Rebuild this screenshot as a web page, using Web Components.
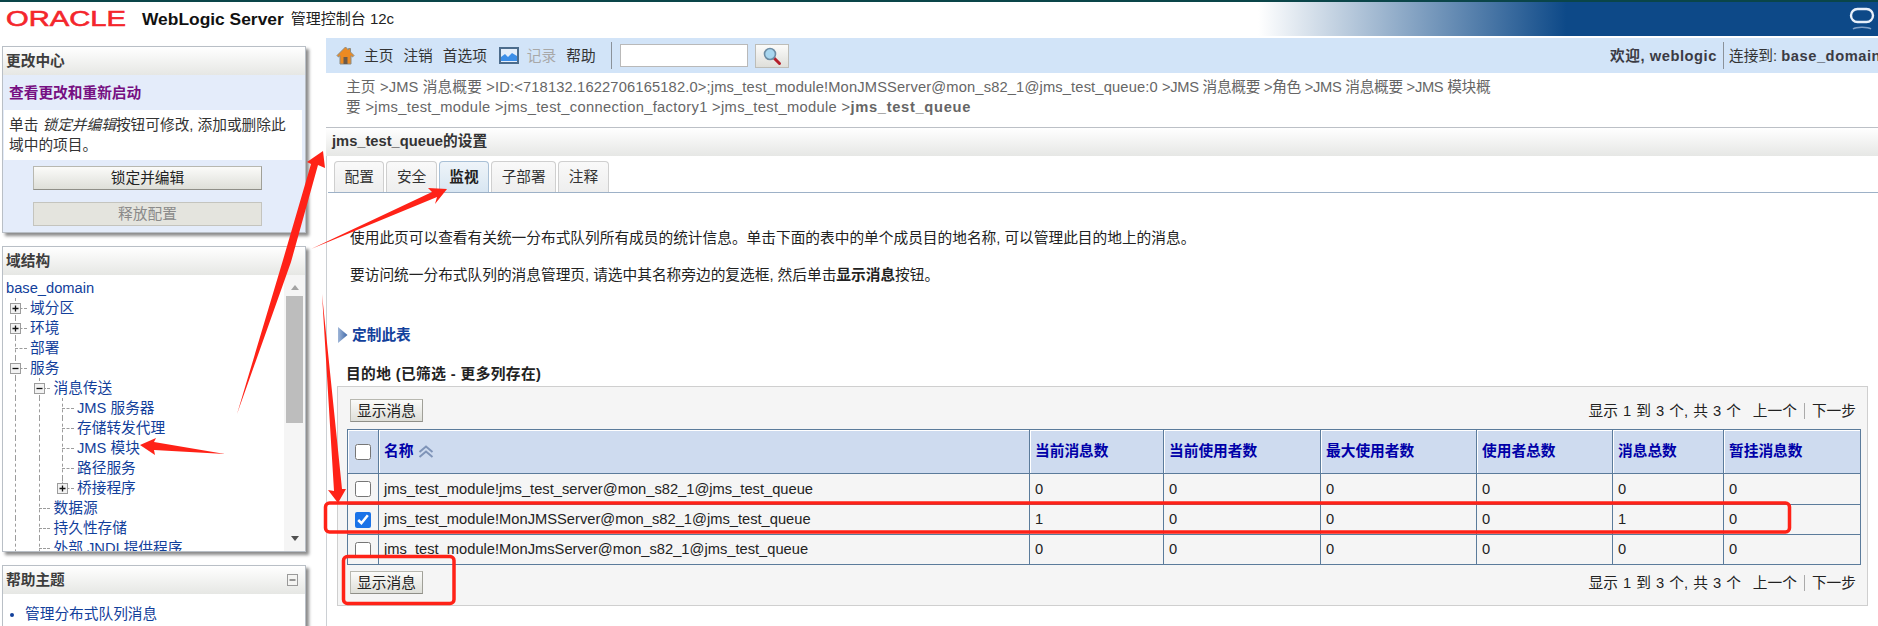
<!DOCTYPE html>
<html lang="zh">
<head>
<meta charset="utf-8">
<title>WebLogic Server</title>
<style>
  html, body {
    margin: 0;
    padding: 0;
    background: #fff;
  }
  body {
    position: relative;
    width: 1878px;
    height: 626px;
    overflow: hidden;
    font: 14.7px/20px "Liberation Sans", "Noto Sans CJK SC", sans-serif;
    color: #333;
  }
  .page {
    display: flex;
    height: 588px;
    margin-top: 2px;
    overflow: hidden;
  }
  wl-sidebar { flex: none; }
  wl-main { flex: 1; min-width: 0; }
</style>
</head>
<body>
  <wl-topbar></wl-topbar>
  <div class="page">
    <wl-sidebar>
      <wl-panel title="更改中心"><wl-change-center></wl-change-center></wl-panel>
      <wl-panel title="域结构"><wl-tree></wl-tree></wl-panel>
      <wl-panel title="帮助主题" collapsible><wl-help></wl-help></wl-panel>
    </wl-sidebar>
    <wl-main>
      <wl-nav></wl-nav>
      <wl-breadcrumb></wl-breadcrumb>
      <wl-settings></wl-settings>
    </wl-main>
  </div>
  <wl-annotations></wl-annotations>

<script>
class WlTopbar extends HTMLElement {
  connectedCallback() {
    const shadow = this.attachShadow({ mode: 'open' });
    shadow.innerHTML = `
      <style>
        :host {
          display: flex;
          align-items: center;
          height: 34px;
          border-top: 2px solid #0a4549;
          background: linear-gradient(to right, #fff 67%, #0d4988 83.4%);
          color: #222;
        }
        .logo { flex: none; margin-left: 6px; display: block; overflow: visible; }
        .product {
          margin-left: 12px;
          font-weight: bold;
          font-size: 17.4px;
          color: #111;
        }
        .console { margin-left: 7px; font-size: 15px; }
        .mark { margin-left: auto; margin-right: 3px; display: block; }
      </style>
      <svg class="logo" width="124" height="26" viewBox="0 0 124 26">
        <text x="0" y="20" font-family="Liberation Sans" font-size="22.5" fill="#f4262c" stroke="#f4262c" stroke-width=".6" textLength="120" lengthAdjust="spacingAndGlyphs">ORACLE</text>
      </svg>
      <span class="product">WebLogic Server</span>
      <span class="console">管理控制台 12c</span>
      <svg class="mark" width="26" height="26" viewBox="0 0 26 26" fill="none">
        <rect x="2" y="3" width="22" height="13" rx="6.5" stroke="#e8f0fa" stroke-width="2.4"/>
        <path d="M4 23c3-2.4 15-2.4 18 0" stroke="#7f9fc6" stroke-width="1.6"/>
      </svg>
    `;
  }
}
customElements.define('wl-topbar', WlTopbar);

class WlSidebar extends HTMLElement {
  connectedCallback() {
    const shadow = this.attachShadow({ mode: 'open' });
    shadow.innerHTML = `
      <style>
        :host {
          display: flex;
          flex-direction: column;
          gap: 13px;
          box-sizing: border-box;
          width: 326px;
          padding: 8px 20px 0 2px;
        }
      </style>
      <slot></slot>
    `;
  }
}
customElements.define('wl-sidebar', WlSidebar);

class WlPanel extends HTMLElement {
  connectedCallback() {
    const shadow = this.attachShadow({ mode: 'open' });
    const toggle = this.hasAttribute('collapsible')
      ? `<svg width="11" height="12" viewBox="0 0 11 12"><rect x=".5" y=".5" width="10" height="11" fill="#f4f4f2" stroke="#9a9a9a"/><path d="M2.5 6h6" stroke="#555" stroke-width="1.2"/></svg>`
      : '';
    shadow.innerHTML = `
      <style>
        :host {
          display: block;
          flex: none;
          border: 1px solid #b9bfc6;
          box-shadow: 3px 3px 3px #8c8c8c;
          background: #fff;
        }
        .head {
          display: flex;
          align-items: center;
          justify-content: space-between;
          box-sizing: border-box;
          height: 28px;
          padding: 0 7px 0 3px;
          font-weight: bold;
          color: #3d3d3d;
          background: linear-gradient(#fff, #e6e7e4);
        }
      </style>
      <div class="head"><span>${this.getAttribute('title')}</span>${toggle}</div>
      <slot></slot>
    `;
  }
}
customElements.define('wl-panel', WlPanel);

class WlButton extends HTMLElement {
  connectedCallback() {
    const shadow = this.attachShadow({ mode: 'open' });
    shadow.innerHTML = `
      <style>
        :host {
          display: inline-flex;
          align-items: center;
          justify-content: center;
          box-sizing: border-box;
          height: 23px;
          border: 1px solid #b8b8b0;
          border-bottom-color: #8f8f88;
          border-right-color: #a0a098;
          background: linear-gradient(#fbfbf9, #dedfd9);
          color: #222;
        }
        :host([disabled]) {
          border-color: #c4c4be;
          background: #e4e4de;
          color: #8a8a8a;
        }
      </style>
      <slot></slot>
    `;
  }
}
customElements.define('wl-button', WlButton);

class WlChangeCenter extends HTMLElement {
  connectedCallback() {
    const shadow = this.attachShadow({ mode: 'open' });
    shadow.innerHTML = `
      <style>
        :host {
          display: block;
          box-sizing: border-box;
          height: 157px;
          padding: 0 3px 0 1px;
          background: #e4ecfa;
        }
        .view {
          height: 35px;
          padding: 8px 0 0 5px;
          box-sizing: border-box;
          color: #760f82;
          font-weight: bold;
        }
        .note {
          padding: 5px;
          background: #fff;
        }
        wl-button {
          display: flex;
          width: 229px;
          height: 24px;
          margin: 6px 0 0 29px;
        }
        wl-button + wl-button { margin-top: 12px; }
      </style>
      <div class="view">查看更改和重新启动</div>
      <div class="note">单击 <i>锁定并编辑</i>按钮可修改, 添加或删除此域中的项目。</div>
      <wl-button>锁定并编辑</wl-button>
      <wl-button disabled>释放配置</wl-button>
    `;
  }
}
customElements.define('wl-change-center', WlChangeCenter);

class WlTreeRow extends HTMLElement {
  connectedCallback() {
    const shadow = this.attachShadow({ mode: 'open' });
    const guides = (this.getAttribute('guides') || '').split('').map(g =>
      `<span class="cell ${g === '1' ? 'line' : ''}"></span>`).join('');
    const toggle = this.getAttribute('toggle');
    const box = toggle
      ? `<svg class="toggle" width="11" height="11" viewBox="0 0 11 11"><rect x=".5" y=".5" width="10" height="10" fill="#f2f2f2" stroke="#9c9c9c"/><path d="M2.5 5.5h6${toggle === 'plus' ? 'M5.5 2.5v6' : ''}" stroke="#111" stroke-width="1.3"/></svg>`
      : '';
    const last = this.hasAttribute('last') ? 'half' : 'line';
    const joint = this.hasAttribute('root') ? '' : `<span class="cell joint ${last}">${box}</span>`;
    shadow.innerHTML = `
      <style>
        :host {
          display: flex;
          align-items: stretch;
          height: 20px;
          white-space: nowrap;
          color: #12409b;
        }
        .cell {
          position: relative;
          flex: none;
          width: 23.5px;
        }
        .line::before, .half::before {
          content: "";
          position: absolute;
          left: 12px;
          top: 0;
          bottom: 0;
          border-left: 1px dashed #9c9c9c;
        }
        .half::before { bottom: 50%; }
        .joint::after {
          content: "";
          position: absolute;
          left: 12px;
          right: 0;
          top: 10px;
          border-top: 1px dashed #9c9c9c;
        }
        .toggle {
          position: absolute;
          left: 7px;
          top: 5px;
          z-index: 1;
        }
        .label { padding-left: 3.5px; }
        :host([root]) .label { padding-left: 3px; }
      </style>
      ${guides}${joint}<span class="label"><slot></slot></span>
    `;
  }
}
customElements.define('wl-tree-row', WlTreeRow);

class WlTree extends HTMLElement {
  connectedCallback() {
    const shadow = this.attachShadow({ mode: 'open' });
    shadow.innerHTML = `
      <style>
        :host {
          display: flex;
          height: 276px;
          overflow: hidden;
        }
        .rows {
          flex: 1;
          min-width: 0;
          padding: 3px 0 0 0;
          overflow: hidden;
        }
        .rail {
          flex: none;
          display: flex;
          flex-direction: column;
          align-items: center;
          width: 21px;
          box-sizing: border-box;
          padding: 10px 2px 10px;
          background: #f5f5f5;
        }
        .up { border: 4.5px solid transparent; border-top: 0; border-bottom: 5px solid #a3a3a3; }
        .down { border: 4.5px solid transparent; border-bottom: 0; border-top: 5px solid #505050; }
        .thumb { width: 17px; height: 127px; margin-top: 6px; background: #bdbdbd; }
        .gap { flex: 1; }
      </style>
      <div class="rows">
        <wl-tree-row root>base_domain</wl-tree-row>
        <wl-tree-row toggle="plus">域分区</wl-tree-row>
        <wl-tree-row toggle="plus">环境</wl-tree-row>
        <wl-tree-row>部署</wl-tree-row>
        <wl-tree-row toggle="minus">服务</wl-tree-row>
        <wl-tree-row guides="1" toggle="minus">消息传送</wl-tree-row>
        <wl-tree-row guides="11">JMS 服务器</wl-tree-row>
        <wl-tree-row guides="11">存储转发代理</wl-tree-row>
        <wl-tree-row guides="11">JMS 模块</wl-tree-row>
        <wl-tree-row guides="11">路径服务</wl-tree-row>
        <wl-tree-row guides="11" toggle="plus" last>桥接程序</wl-tree-row>
        <wl-tree-row guides="1">数据源</wl-tree-row>
        <wl-tree-row guides="1">持久性存储</wl-tree-row>
        <wl-tree-row guides="1">外部 JNDI 提供程序</wl-tree-row>
      </div>
      <div class="rail">
        <span class="up"></span>
        <span class="thumb"></span>
        <span class="gap"></span>
        <span class="down"></span>
      </div>
    `;
  }
}
customElements.define('wl-tree', WlTree);

class WlHelp extends HTMLElement {
  connectedCallback() {
    const shadow = this.attachShadow({ mode: 'open' });
    shadow.innerHTML = `
      <style>
        :host {
          display: block;
          height: 60px;
          padding-top: 10px;
          box-sizing: border-box;
        }
        ul { margin: 0; padding: 0 0 0 22px; color: #12409b; }
      </style>
      <ul><li>管理分布式队列消息</li></ul>
    `;
  }
}
customElements.define('wl-help', WlHelp);

class WlNav extends HTMLElement {
  connectedCallback() {
    const shadow = this.attachShadow({ mode: 'open' });
    shadow.innerHTML = `
      <style>
        :host {
          display: flex;
          align-items: center;
          height: 35px;
          background: #d2e4f8;
          white-space: nowrap;
        }
        .left {
          flex: 1;
          display: flex;
          align-items: center;
          padding-left: 10px;
        }
        .left svg { display: block; flex: none; }
        .item { margin-left: 10px; }
        .off { color: #a8a8a8; }
        .sep { flex: none; width: 1px; height: 27px; background: #8b929a; }
        input {
          box-sizing: border-box;
          width: 128px;
          height: 23px;
          margin: 0 7px 0 9px;
          border: 1px solid #b9b9b9;
          background: #fff;
        }
        .search {
          display: flex;
          align-items: center;
          justify-content: center;
          box-sizing: border-box;
          width: 34px;
          height: 24px;
          border: 1px solid #bdbdb8;
          background: linear-gradient(#fbfbfa, #dfdfda);
        }
        .right {
          flex: none;
          display: flex;
          align-items: center;
          width: 268px;
          overflow: hidden;
        }
        .right b { color: #3b3b44; letter-spacing: .55px; }
        .right .sep { margin: 0 5px 0 6px; }
      </style>
      <div class="left">
        <svg width="19" height="19" viewBox="0 0 19 19">
          <path d="M9.5 1 1 9.5 2.5 11 4 9.6V18h11V9.6l1.5 1.4L18 9.5 14.5 6V2.500h-2v1.500z" fill="#ec8a22" stroke="#8c8c84" stroke-width="1"/>
          <rect x="7.500" y="11" width="4" height="7" fill="#6b5a4a"/>
        </svg>
        <span class="item" style="margin-left:9px">主页</span>
        <span class="item">注销</span>
        <span class="item">首选项</span>
        <svg class="item" style="margin-left:12px" width="20" height="17" viewBox="0 0 20 17">
          <rect x="1" y="1" width="18" height="15" fill="#e4eefb" stroke="#4c6c8c" stroke-width="2"/>
          <path d="M2 14V10l4-3 3 3 4-4 5 3v5z" fill="#3c8ee8"/>
        </svg>
        <span class="item off" style="margin-left:8px">记录</span>
        <span class="item">帮助</span>
        <span class="sep" style="margin-left:15px"></span>
        <input type="text" style="margin-left:8px">
        <span class="search">
          <svg width="20" height="20" viewBox="0 0 20 20" fill="none">
            <path d="m12 12 5.500 5.500" stroke="#b5202c" stroke-width="3" stroke-linecap="round"/>
            <circle cx="8" cy="8" r="5.500" fill="#a8d6ef" stroke="#6c8ca4" stroke-width="1.600"/>
          </svg>
        </span>
      </div>
      <div class="right">
        <b>欢迎, weblogic</b><span class="sep"></span><span>连接到:&nbsp;<b>base_domain</b></span>
      </div>
    `;
  }
}
customElements.define('wl-nav', WlNav);

class WlBreadcrumb extends HTMLElement {
  connectedCallback() {
    const shadow = this.attachShadow({ mode: 'open' });
    shadow.innerHTML = `
      <style>
        :host {
          display: block;
          box-sizing: border-box;
          height: 54px;
          padding: 4px 0 0 20px;
          color: #666;
          white-space: nowrap;
        }
        .a { letter-spacing: .15px; }
        .b { letter-spacing: -.3px; }
        .c { letter-spacing: .34px; }
        b { letter-spacing: .68px; }
      </style>
      <span class="a">主页 &gt;JMS 消息概要 &gt;ID:&lt;718132.1622706165182.0&gt;;jms_test_module!MonJMSServer@mon_s82_1@jms_test_queue:0 </span><span class="b">&gt;JMS 消息概要 &gt;角色 &gt;JMS 消息概要 &gt;JMS 模块概</span><br>
      <span class="c">要 &gt;jms_test_module &gt;jms_test_connection_factory1 &gt;jms_test_module &gt;</span><b>jms_test_queue</b>
    `;
  }
}
customElements.define('wl-breadcrumb', WlBreadcrumb);

class WlTabs extends HTMLElement {
  connectedCallback() {
    const shadow = this.attachShadow({ mode: 'open' });
    const active = this.getAttribute('active');
    const tabs = this.getAttribute('items').split(',').map(t =>
      `<span class="tab ${t === active ? 'on' : ''}">${t}</span>`).join('');
    shadow.innerHTML = `
      <style>
        :host {
          display: flex;
          gap: 2px;
          height: 31px;
          margin: 5px 0 0 1px;
          padding-left: 6px;
          border-bottom: 1px solid #9db1c7;
        }
        .tab {
          display: flex;
          align-items: center;
          box-sizing: border-box;
          padding: 0 9.500px;
          border: 1px solid #cfcfcf;
          border-bottom: 0;
          border-radius: 4px 4px 0 0;
          background: linear-gradient(#f9f9f9, #eee);
        }
        .on {
          border-color: #a9c0d6;
          background: linear-gradient(#eef4f9, #d8e6f2);
          font-weight: bold;
          color: #222;
        }
      </style>
      ${tabs}
    `;
  }
}
customElements.define('wl-tabs', WlTabs);

class WlDestRow extends HTMLElement {
  connectedCallback() {
    const shadow = this.attachShadow({ mode: 'open' });
    const checked = this.hasAttribute('checked') ? 'checked' : '';
    const head = this.hasAttribute('head');
    const cells = (this.getAttribute('cells') || '').split('|').map((c, i) => {
      const sort = head && i === 0
        ? `<svg class="sort" width="16" height="13" viewBox="0 0 16 13" fill="none" stroke="#7f94b8" stroke-width="2"><path d="m1.500 7 6.500-5.500 6.500 5.500"/><path d="m1.500 12 6.500-5.500 6.500 5.500"/></svg>`
        : '';
      return `<span class="cell">${c}${sort}</span>`;
    }).join('');
    shadow.innerHTML = `
      <style>
        :host {
          display: grid;
          grid-template-columns: var(--cols);
          height: var(--h, 30px);
          border-bottom: 1px solid #5b7b9b;
          box-sizing: content-box;
          color: #222;
        }
        :host([shade]) { background: #f5f5f5; }
        :host([head]) {
          background: #cedbef;
          color: #0000a8;
          font-weight: bold;
        }
        .cell {
          display: flex;
          align-items: center;
          box-sizing: border-box;
          min-width: 0;
          padding: 0 0 1px 5px;
          border-left: 1px solid #5b7b9b;
          white-space: nowrap;
        }
        :host([head]) .cell { box-shadow: inset 1px 1px 0 #fff; }
        .box { justify-content: center; padding: 0; }
        input {
          width: 16px;
          height: 16px;
          margin: 0;
          accent-color: #1a73e8;
        }
        .sort { margin-left: 5px; }
      </style>
      <span class="cell box"><input type="checkbox" ${checked}></span>${cells}
    `;
  }
}
customElements.define('wl-dest-row', WlDestRow);

class WlDestTable extends HTMLElement {
  connectedCallback() {
    const shadow = this.attachShadow({ mode: 'open' });
    shadow.innerHTML = `
      <style>
        :host {
          display: block;
          --cols: 31px 651px 134px 157px 156px 136px 111px 137px;
          box-sizing: border-box;
          width: 1514px;
          border-top: 1px solid #5b7b9b;
          border-right: 1px solid #5b7b9b;
        }
      </style>
      <slot></slot>
    `;
  }
}
customElements.define('wl-dest-table', WlDestTable);

class WlPager extends HTMLElement {
  connectedCallback() {
    const shadow = this.attachShadow({ mode: 'open' });
    shadow.innerHTML = `
      <style>
        :host {
          display: flex;
          align-items: center;
          justify-content: space-between;
          height: 23px;
          padding: 0 11px 0 3px;
          white-space: nowrap;
          color: #222;
        }
        .pages { display: flex; align-items: center; }
        .sep { width: 1px; height: 16px; margin: 0 7px; background: #aaa; }
        .count { margin-right: 12px; word-spacing: 1px; }
      </style>
      <wl-button style="width:73px">显示消息</wl-button>
      <div class="pages">
        <span class="count">显示 1 到 3 个, 共 3 个</span>
        <span>上一个</span><span class="sep"></span><span>下一步</span>
      </div>
    `;
  }
}
customElements.define('wl-pager', WlPager);

class WlSettings extends HTMLElement {
  connectedCallback() {
    const shadow = this.attachShadow({ mode: 'open' });
    shadow.innerHTML = `
      <style>
        :host {
          display: block;
          border-left: 1px solid #ccd0d4;
          height: 499px;
        }
        .title {
          box-sizing: border-box;
          height: 29px;
          margin-left: -1px;
          padding: 3px 0 0 6px;
          border-top: 1px solid #bcc0c6;
          background: linear-gradient(#fff, #e6e7e5);
          font-weight: bold;
          color: #333;
        }
        p { margin: 0 0 17px 23px; color: #222; }
        .intro { margin-top: 35px; }
        .customize {
          display: flex;
          align-items: center;
          gap: 4px;
          margin: 40px 0 0 10px;
          color: #12409b;
          font-weight: bold;
        }
        h3 {
          margin: 19px 0 2px 19px;
          font: inherit;
          font-weight: bold;
          letter-spacing: .4px;
          color: #222;
        }
        .box {
          box-sizing: border-box;
          width: 1531px;
          height: 220px;
          margin-left: 10px;
          padding: 12px 0 0 9px;
          border: 1px solid #cfcfcf;
          background: #f5f5f5;
        }
        wl-dest-table { margin: 7px 0 6px; }
      </style>
      <div class="title">jms_test_queue的设置</div>
      <wl-tabs items="配置,安全,监视,子部署,注释" active="监视"></wl-tabs>
      <p class="intro">使用此页可以查看有关统一分布式队列所有成员的统计信息。单击下面的表中的单个成员目的地名称, 可以管理此目的地上的消息。</p>
      <p>要访问统一分布式队列的消息管理页, 请选中其名称旁边的复选框, 然后单击<b>显示消息</b>按钮。</p>
      <div class="customize">
        <svg width="11" height="16" viewBox="0 0 11 16">
          <defs><linearGradient id="tri" x1="0" x2="1" y1="0" y2="0"><stop offset="0" stop-color="#9fb6d8"/><stop offset="1" stop-color="#3f68a8"/></linearGradient></defs>
          <path d="M1 0 10.500 8 1 16z" fill="url(#tri)"/>
        </svg>
        <span>定制此表</span>
      </div>
      <h3>目的地 (已筛选 - 更多列存在)</h3>
      <div class="box">
        <wl-pager></wl-pager>
        <wl-dest-table>
          <wl-dest-row head style="--h:43px" cells="名称|当前消息数|当前使用者数|最大使用者数|使用者总数|消息总数|暂挂消息数"></wl-dest-row>
          <wl-dest-row cells="jms_test_module!jms_test_server@mon_s82_1@jms_test_queue|0|0|0|0|0|0"></wl-dest-row>
          <wl-dest-row shade checked style="--h:29px" cells="jms_test_module!MonJMSServer@mon_s82_1@jms_test_queue|1|0|0|0|1|0"></wl-dest-row>
          <wl-dest-row style="--h:29px" cells="jms_test_module!MonJmsServer@mon_s82_1@jms_test_queue|0|0|0|0|0|0"></wl-dest-row>
        </wl-dest-table>
        <wl-pager></wl-pager>
      </div>
    `;
  }
}
customElements.define('wl-settings', WlSettings);

class WlMain extends HTMLElement {
  connectedCallback() {
    const shadow = this.attachShadow({ mode: 'open' });
    shadow.innerHTML = `
      <style>
        :host { display: block; }
      </style>
      <slot></slot>
    `;
  }
}
customElements.define('wl-main', WlMain);

// red marks someone drew over the screenshot
class WlAnnotations extends HTMLElement {
  connectedCallback() {
    const shadow = this.attachShadow({ mode: 'open' });
    shadow.innerHTML = `
      <style>
        :host {
          position: absolute;
          left: 0;
          top: 0;
          width: 1878px;
          height: 626px;
          pointer-events: none;
        }
        svg { display: block; }
      </style>
      <svg width="1878" height="626" viewBox="0 0 1878 626">
        <g fill="#ff2217">
          <path d="M323 151 325 168 318 165 291 262 237 414 283 260 311 164 307 162z"/>
          <path d="M447 189 435 204 437 197 311 249 432 192 428 188z"/>
          <path d="M322 294 342 489 346 489 338 503 328 490 334 491z"/>
          <path d="M140 445 156 438 154 442 225 454 154 450 155 455z"/>
        </g>
        <g fill="none" stroke="#ff2217" stroke-width="3.5">
          <rect x="325.500" y="503" width="1464" height="29" rx="4"/>
          <rect x="343.500" y="556.500" width="110.500" height="47" rx="4"/>
        </g>
      </svg>
    `;
  }
}
customElements.define('wl-annotations', WlAnnotations);
</script>
</body>
</html>
